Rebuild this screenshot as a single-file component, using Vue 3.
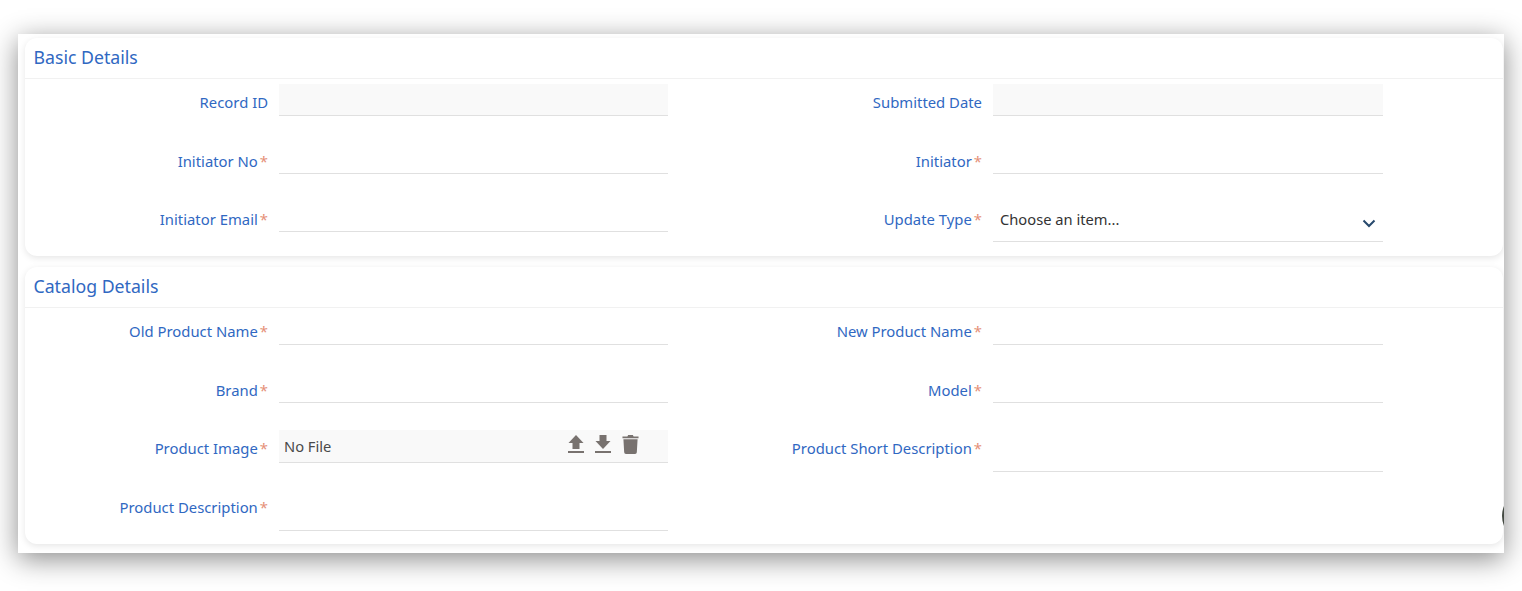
<script setup>
const basic = [
  { label: 'Record ID', type: 'readonly', label2: 'Submitted Date', type2: 'readonly', noReq: true },
  { label: 'Initiator No', type: 'input', label2: 'Initiator', type2: 'input' },
  { label: 'Initiator Email', type: 'input', label2: 'Update Type', type2: 'select' },
]
const catalog = [
  { label: 'Old Product Name', type: 'input', label2: 'New Product Name', type2: 'input' },
  { label: 'Brand', type: 'input', label2: 'Model', type2: 'input' },
  { label: 'Product Image', type: 'file', label2: 'Product Short Description', type2: 'tall' },
  { label: 'Product Description', type: 'tall' },
]
const sections = [
  { title: 'Basic Details', rows: basic, cls: 'card-basic' },
  { title: 'Catalog Details', rows: catalog, cls: 'card-catalog' },
]
</script>

<template>
  <div class="page">
    <div class="sheet">
      <section v-for="s in sections" :key="s.title" class="card" :class="s.cls">
        <h2 class="title">{{ s.title }}</h2>
        <div class="grid">
          <template v-for="r in s.rows" :key="r.label">
            <label class="label">{{ r.label }}<span v-if="!r.noReq" class="req">*</span></label>
            <div v-if="r.type === 'file'" class="field file">
              <span class="file-name">No File</span>
              <span class="file-icons">
                <svg class="ico" viewBox="0 0 18 18"><path d="M9 0 L16.500 8 H12.500 V14 H5.500 V8 H1.500 Z M1 16 H17 V18 H1 Z" /></svg>
                <svg class="ico" viewBox="0 0 18 18"><path d="M5.500 0 H12.500 V6 H16.500 L9 14 L1.500 6 H5.500 Z M1 16 H17 V18 H1 Z" /></svg>
                <svg class="ico trash" viewBox="0 0 18 20"><path d="M6.500 0 H11.500 L12.300 1.500 H17.500 V3.500 H0.500 V1.500 H5.700 Z M1.500 4.500 H16.500 L15.700 18.200 Q15.600 20 13.800 20 H4.200 Q2.400 20 2.300 18.200 Z" /></svg>
              </span>
            </div>
            <div v-else class="field" :class="r.type"></div>
            <template v-if="r.label2">
              <label class="label">{{ r.label2 }}<span class="req" v-if="!r.noReq">*</span></label>
              <div class="field" :class="r.type2">
                <template v-if="r.type2 === 'select'">
                  <span class="select-text">Choose an item...</span>
                  <svg class="chev" viewBox="0 0 14 9"><path d="M1.500 1.500 L7 7 L12.500 1.500" /></svg>
                </template>
              </div>
            </template>
          </template>
        </div>
      </section>
      <span class="fab"></span>
    </div>
  </div>
</template>

<style>
html, body { margin: 0; background: #fff; overflow: hidden; }
</style>

<style scoped>
.page {
  width: 1522px;
  height: 591px;
  padding: 34px 18px 0;
  box-sizing: border-box;
  font-family: "Noto Sans", "Open Sans", sans-serif;
}
.sheet {
  position: relative;
  height: 519px;
  background: #fff;
  box-shadow: 0 6px 26px rgba(0, 0, 0, 0.46);
  padding: 4px 1px 0 7px;
  box-sizing: border-box;
  overflow: hidden;
}
.card {
  background: #fff;
  border-radius: 12px;
  box-shadow: 0 2px 7px rgba(0, 0, 0, 0.1);
}
.card-basic { height: 218px; margin-bottom: 11px; }
.card-catalog { height: 277px; }
.title {
  margin: 0;
  height: 40px;
  border-bottom: 1px solid #f1f1f1;
  padding-left: 8.500px;
  font-size: 17.700px;
  font-weight: 400;
  line-height: 39px;
  color: #3068c2;
}
.grid {
  display: grid;
  grid-template-columns: 253.500px 389.500px 324.500px 390px;
  row-gap: 27px;
  padding-top: 5px;
  align-items: start;
}
.label {
  text-align: right;
  padding-right: 10.500px;
  font-size: 14.850px;
  line-height: 20px;
  padding-top: 8px;
  color: #3068c2;
  white-space: nowrap;
}
.req {
  color: #e58f78;
  margin-left: 2px;
  display: inline-block;
}
.field {
  height: 31px;
  border-bottom: 1px solid #e0e0e0;
  box-sizing: border-box;
}
.card-catalog .field { height: 31.500px; }
.readonly,
.card-basic .readonly { height: 32px; background: #f9f9f9; }
.select,
.card-basic .select {
  height: 41px;
  display: flex;
  align-items: center;
  justify-content: space-between;
  padding: 0 7px 5px 7.500px;
}
.select-text { font-size: 14.700px; color: #333; }
.chev { width: 14px; height: 9px; fill: none; stroke: #27496d; stroke-width: 2; margin-top: 9px; }
.card-catalog .tall { height: 42px; margin-bottom: -10px; }
.card-catalog .file {
  height: 33px;
  margin-bottom: -1px;
  background: #f9f9f9;
  display: flex;
  align-items: center;
  justify-content: space-between;
  padding: 0 29px 0 5.500px;
}
.file-name { font-size: 14.700px; color: #4a4a4a; }
.file-icons { display: flex; gap: 9px; align-items: center; margin-top: -4px; }
.ico { width: 18px; height: 18px; fill: #78726f; }
.trash { width: 17px; height: 19px; margin-left: 1px; }
.fab {
  position: absolute;
  left: 1483.600px;
  top: 456px;
  width: 52px;
  height: 52px;
  border-radius: 50%;
  background: #454b44;
}
</style>
